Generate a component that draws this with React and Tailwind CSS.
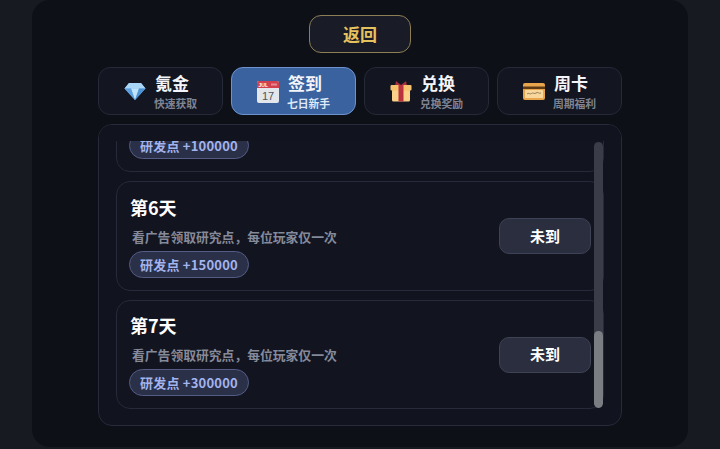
const Diamond = () => (
  <svg width="22" height="20" viewBox="0 0 22 20">
    <path d="M5 2h12l4.500 5.500L11 19 .5 7.500z" fill="#7db8ea" />
    <path d="M5 2h12l4.500 5.500H.5z" fill="#a9d6f7" />
    <path d="M7 7.500h8L11 19z" fill="#bfe3fa" />
    <path d="M.5 7.500H7L11 19z" fill="#5c9fdc" />
    <path d="M15 7.500h6.500L11 19z" fill="#4f92d2" />
  </svg>
);
const Calendar = () => (
  <svg width="22" height="23" viewBox="0 0 22 23">
    <rect x="0" y="1" width="22" height="22" rx="2" fill="#e3e6ea" />
    <path d="M0 3a2 2 0 0 1 2-2h18a2 2 0 0 1 2 2v5H0z" fill="#d1404f" />
    <text x="1.500" y="6.800" fontSize="5" fontWeight="700" fill="#fff" fontFamily="Liberation Sans, sans-serif">JUL</text>
    <rect x="14" y="3.500" width="6" height="2" fill="#e98a93" />
    <text x="11" y="20" fontSize="11" textAnchor="middle" fill="#4d5560" fontFamily="Liberation Sans, sans-serif">17</text>
  </svg>
);
const Gift = () => (
  <svg width="22" height="22" viewBox="0 0 22 22">
    <path d="M6 1l5 4 5-4 1 5H5z" fill="#a52f3c" />
    <rect x="2" y="9" width="18" height="12.500" rx="1.500" fill="#fdd187" />
    <rect x="0.500" y="5" width="21" height="5.500" rx="1" fill="#f8c36f" />
    <rect x="8.500" y="5" width="5" height="16.500" fill="#b8323f" />
  </svg>
);
const Card = () => (
  <svg width="22" height="17" viewBox="0 0 22 17">
    <rect x="0" y="0" width="22" height="17" rx="2" fill="#e8a54b" />
    <rect x="0" y="3.500" width="22" height="2.500" fill="#5a3a17" />
    <rect x="2" y="7" width="18" height="8" rx="0.500" fill="#f7d79b" />
    <path d="M4 11c1.500-2 3 1 4.500-.5s3 1 4.500-.5 3 1 5 0" stroke="#8d7550" strokeWidth="0.900" fill="none" />
  </svg>
);

const tabs = [
  { title: "氪金", sub: "快速获取", icon: <Diamond /> },
  { title: "签到", sub: "七日新手", icon: <Calendar />, active: true },
  { title: "兑换", sub: "兑换奖励", icon: <Gift /> },
  { title: "周卡", sub: "周期福利", icon: <Card /> },
];

const Pill = ({ children }) => (
  <span className="inline-flex h-[27px] w-[120px] items-center justify-center rounded-full border border-[#555c85] bg-[#2a3047] text-[13px] font-bold leading-none tracking-[0.2px] text-[#a3b4ee]">
    {children}
  </span>
);

const DayCard = ({ title, points, height }) => (
  <div className={`flex shrink-0 items-center justify-between rounded-[14px] border border-[#262a3a] bg-[#121420] pl-[12px] pr-[12px] ${height}`}>
    <div className="flex flex-col items-start">
      <div className="-mt-px pl-px text-[18px] font-bold leading-[26px] text-white">{title}</div>
      <div className="mt-[8px] pl-[3px] text-[12.800px] font-bold leading-[18px] text-[#858a9a]">看广告领取研究点，每位玩家仅一次</div>
      <div className="mt-[5px]"><Pill>研发点 {points}</Pill></div>
    </div>
    <button className="h-[36px] w-[92px] rounded-[10px] border border-[#3d4254] bg-[#2a2e3e] text-[15px] font-bold text-white">未到</button>
  </div>
);

export default function App() {
  return (
    <div
      className="flex h-[449px] w-[720px] justify-center overflow-hidden bg-[#181a21] text-[#eef0f5]"
      style={{ fontFamily: '"Noto Sans CJK SC", "Noto Sans", sans-serif' }}
    >
      <div className="flex h-[447px] w-[656px] flex-col items-center rounded-[18px] bg-[#0e1017] pt-[15px]">
        <button className="h-[38px] w-[102px] rounded-[12px] border border-[#8d7f55] bg-[#191b26] pb-px text-[17px] font-bold text-[#e6c25f]">返回</button>

        <div className="mt-[14px] flex w-[524px] gap-[8px]">
          {tabs.map((t) => (
            <div
              key={t.title}
              className={`flex h-[48px] flex-1 items-center justify-center gap-[8px] rounded-[12px] border ${t.active ? "border-[#6d93cf] bg-[#3a629f]" : "border-[#252938] bg-[#131520]"}`}
            >
              {t.icon}
              <div className="flex flex-col items-start">
                <span className="pl-px text-[17px] font-bold leading-[22px] text-[#f3f5fa]">{t.title}</span>
                <span className={`mt-[2px] text-[10.800px] font-bold leading-[14px] ${t.active ? "text-[#dfe8f7]" : "text-[#7f8494]"}`}>{t.sub}</span>
              </div>
            </div>
          ))}
        </div>

        <div className="relative mt-[9px] h-[302px] w-[524px] overflow-hidden rounded-[14px] border border-[#262a3a] bg-[#11131e]">
          <div className="mx-[17px] flex h-[284px] flex-col gap-[9px] overflow-hidden pt-[8px]">
            <div className="-mt-[72px] flex h-[111px] shrink-0 flex-col justify-end rounded-[14px] border border-[#262a3a] bg-[#121420] pb-[12px] pl-[12px]">
              <div><Pill>研发点 +100000</Pill></div>
            </div>
            <DayCard title="第6天" points="+150000" height="h-[110px]" />
            <DayCard title="第7天" points="+300000" height="h-[109px]" />
          </div>
          <div className="absolute left-0 right-0 top-0 h-[16px] bg-[#11131e]" />
          <div className="absolute left-[495px] top-[17px] h-[266px] w-[9px] overflow-hidden rounded-full bg-[#3a3d48]">
            <div className="absolute bottom-0 h-[77px] w-full rounded-full bg-[#7a7e82]" />
          </div>
        </div>
      </div>
    </div>
  );
}
